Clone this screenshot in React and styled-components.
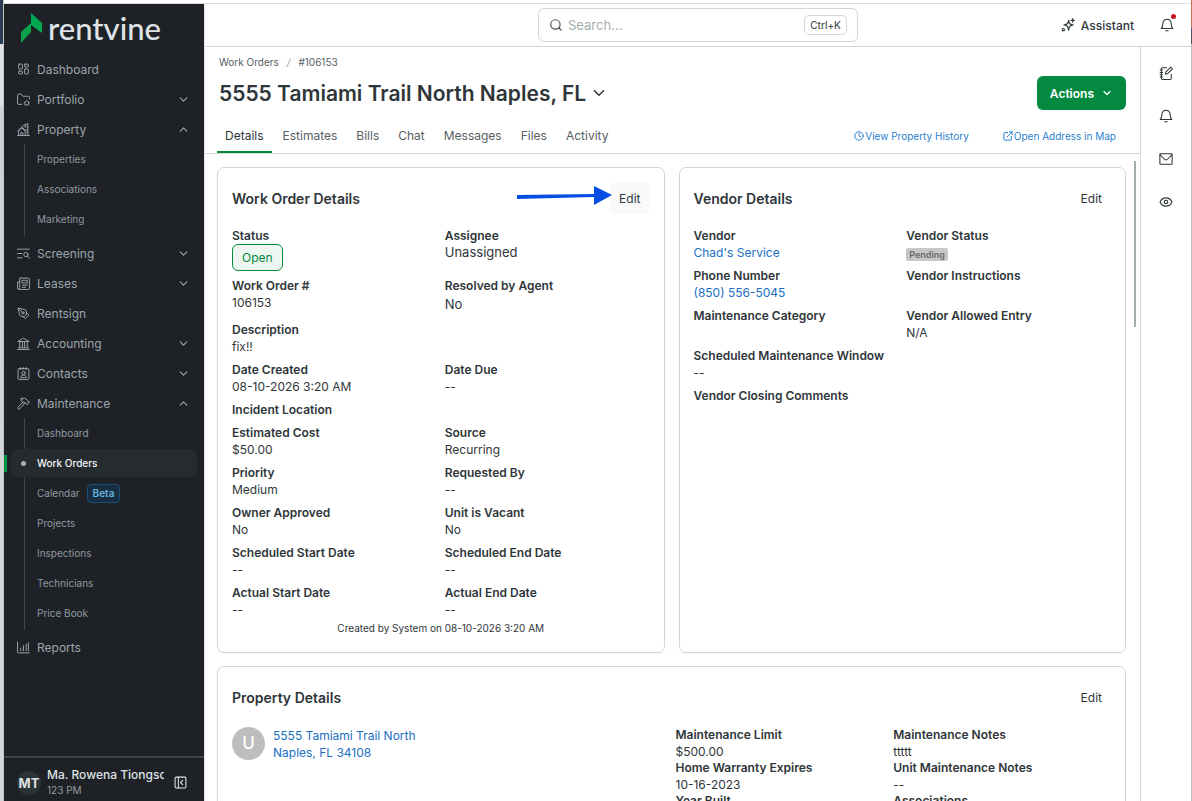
import styled, { createGlobalStyle, css } from "styled-components";
import {
  ChevronDown,
  ChevronUp,
  Clock,
  Eye,
  LayoutDashboard,
  PenTool,
  Search,
} from "lucide-react";

const Icon = ({ size = 13, width = 1.8, children }) => (
  <svg
    width={size}
    height={size}
    viewBox="0 0 24 24"
    fill="none"
    stroke="currentColor"
    strokeWidth={width}
    strokeLinecap="round"
    strokeLinejoin="round"
    aria-hidden="true"
  >
    {children}
  </svg>
);

const FolderHomeIcon = () => (
  <Icon>
    <path d="M9 21H3a2 2 0 0 1-2-2V4a2 2 0 0 1 2-2h5l3 4h10a2 2 0 0 1 2 2v3" />
    <path d="M13 18l5-4 5 4M14.500 17.500V22h7v-4.500" />
  </Icon>
);

const BuildingsIcon = () => (
  <Icon>
    <path d="M1 23h22M3 23v-8l6-6 6 6v8M1 15l8-8 8 8M7 23v-5h4v5" />
    <path d="M11 5l9-4v22M15 3v5M18 7h2M18 12h2M18 17h2" />
  </Icon>
);

const ScreeningIcon = () => (
  <Icon>
    <path d="M1 4h22M1 12h8M1 20h8" />
    <circle cx="16.500" cy="14" r="4" />
    <path d="M19.500 17l3.500 4" />
  </Icon>
);

const LeasesIcon = () => (
  <Icon>
    <path d="M6 2h15a2 2 0 0 1 2 2v17a2 2 0 0 1-2 2H4a3 3 0 0 1-3-3V9h4M5 2v17a2 2 0 0 1-2 3" />
    <path d="M10 6h9v5h-9zM10 15h9M10 19h6" />
  </Icon>
);

const BankIcon = () => (
  <Icon>
    <path d="M2 8l10-6 10 6zM1 23h22M3 20h18M5 9v10M10 9v10M14 9v10M19 9v10" />
  </Icon>
);

const ContactsIcon = () => (
  <Icon>
    <rect x="2" y="3" width="20" height="20" rx="2" />
    <path d="M7 1v4M12 1v3M17 1v4M7 19c0-3 2-4 5-4s5 1 5 4z" />
    <circle cx="12" cy="11" r="3" />
  </Icon>
);

const HammerIcon = () => (
  <Icon>
    <path d="M11 9L2 19a2 2 0 0 0 3 3l9-10" />
    <path d="M7 3c5-2 9-1 12 3l1 2 3 1-4 5-3-2-1-2-4 1-3-4 2-2z" />
  </Icon>
);

const ReportsIcon = () => (
  <Icon>
    <path d="M1 2v18a2 2 0 0 0 2 2h20M7 18v-5M12 18V9M17 18V6M21 18V3" />
  </Icon>
);

const SparkleIcon = () => (
  <Icon size={14} width={2}>
    <path d="M13 4c1 6 2 7 8 8-6 1-7 2-8 9-1-7-2-8-8-9 6-1 7-2 8-8z" />
    <path d="M20 1v6M17 4h6" />
    <circle cx="4" cy="20" r="2" />
  </Icon>
);

const BellIcon = () => (
  <Icon size={14} width={1.8}>
    <path d="M12 2c-4 0-7 3-7 7 0 5-1 7-3 9h20c-2-2-3-4-3-9 0-4-3-7-7-7zM10 22h4" />
  </Icon>
);

const MailIcon = () => (
  <Icon size={14} width={1.8}>
    <rect x="1.500" y="3" width="21" height="18" rx="1" />
    <path d="M2 5l7 7c2 2 4 2 6 0l7-7" />
  </Icon>
);

const NotebookIcon = () => (
  <Icon size={14} width={1.8}>
    <path d="M13 3H6a2 2 0 0 0-2 2v16a2 2 0 0 0 2 2h13a2 2 0 0 0 2-2v-7" />
    <path d="M2 7h4M2 11h4M2 15h4M2 19h4M11 14l1-4 8-8 3 3-8 8z" />
  </Icon>
);

const ExternalIcon = () => (
  <Icon size={10} width={2.4}>
    <path d="M11 4H4a2 2 0 0 0-2 2v14a2 2 0 0 0 2 2h14a2 2 0 0 0 2-2v-7" />
    <path d="M15 2h7v7M22 2L9 15" />
  </Icon>
);

const CollapseIcon = () => (
  <Icon width={2}>
    <rect x="2" y="2" width="20" height="20" rx="2" />
    <path d="M8 2v20M16 8l-4 4 4 4" />
  </Icon>
);

const NAV = [
  { label: "Dashboard", icon: <LayoutDashboard size={14} strokeWidth={1.8} /> },
  { label: "Portfolio", icon: <FolderHomeIcon />, items: [] },
  {
    label: "Property",
    icon: <BuildingsIcon />,
    open: true,
    items: [
      { label: "Properties" },
      { label: "Associations" },
      { label: "Marketing" },
    ],
  },
  { label: "Screening", icon: <ScreeningIcon />, items: [] },
  { label: "Leases", icon: <LeasesIcon />, items: [] },
  { label: "Rentsign", icon: <PenTool size={13} strokeWidth={1.8} /> },
  { label: "Accounting", icon: <BankIcon />, items: [] },
  { label: "Contacts", icon: <ContactsIcon />, items: [] },
  {
    label: "Maintenance",
    icon: <HammerIcon />,
    open: true,
    items: [
      { label: "Dashboard" },
      { label: "Work Orders", active: true },
      { label: "Calendar", badge: "Beta" },
      { label: "Projects" },
      { label: "Inspections" },
      { label: "Technicians" },
      { label: "Price Book" },
    ],
  },
  { label: "Reports", icon: <ReportsIcon /> },
];

const TABS = [
  "Details",
  "Estimates",
  "Bills",
  "Chat",
  "Messages",
  "Files",
  "Activity",
];

const Sidebar = () => (
  <SidebarContainer>
    <Logo href="#">
      <svg width="21" height="30" viewBox="0 0 21 30" aria-hidden="true">
        <path d="M10 0l11 10v10L10 12z" fill="#00a94f" />
        <path d="M10 10v9L0 30V19z" fill="#08a04b" />
      </svg>
      rentvine
    </Logo>
    <nav>
      {NAV.map((group) => (
        <div key={group.label}>
          <NavRow href="#">
            <NavIcon>{group.icon}</NavIcon>
            <span>{group.label}</span>
            {group.items &&
              (group.open ? (
                <ChevronUp size={13} strokeWidth={2} />
              ) : (
                <ChevronDown size={13} strokeWidth={2} />
              ))}
          </NavRow>
          {group.open && (
            <SubNav>
              {group.items.map((item) => (
                <SubRow key={item.label} $active={item.active}>
                  <a href="#">{item.label}</a>
                  {item.badge && <BetaBadge>{item.badge}</BetaBadge>}
                </SubRow>
              ))}
            </SubNav>
          )}
        </div>
      ))}
    </nav>
    <UserBar>
      <UserInitials>MT</UserInitials>
      <UserText>
        <strong>Ma. Rowena Tiongson</strong>
        <span>123 PM</span>
      </UserText>
      <IconButton aria-label="Collapse sidebar">
        <CollapseIcon />
      </IconButton>
    </UserBar>
  </SidebarContainer>
);

const TopBar = () => (
  <TopBarContainer>
    <SearchBox>
      <Search size={14} strokeWidth={2} />
      <input type="search" placeholder="Search..." aria-label="Search" />
      <kbd>Ctrl+K</kbd>
    </SearchBox>
    <TopActions>
      <AssistantButton>
        <SparkleIcon />
        Assistant
      </AssistantButton>
      <IconButton aria-label="Notifications">
        <BellIcon />
        <UnreadDot />
      </IconButton>
    </TopActions>
  </TopBarContainer>
);

const PageHeader = () => (
  <PageHeaderContainer>
    <Breadcrumbs aria-label="Breadcrumb">
      <a href="#">Work Orders</a>
      <i>/</i>
      <span>#106153</span>
    </Breadcrumbs>
    <TitleRow>
      <h1>5555 Tamiami Trail North Naples, FL</h1>
      <IconButton aria-label="Switch work order">
        <ChevronDown size={18} strokeWidth={2} />
      </IconButton>
      <ActionsButton>
        Actions
        <ChevronDown size={12} strokeWidth={2.4} />
      </ActionsButton>
    </TitleRow>
    <TabRow>
      {TABS.map((tab) => (
        <Tab key={tab} $active={tab === "Details"}>
          {tab}
        </Tab>
      ))}
      <QuickLinks>
        <a href="#">
          <Clock size={10} strokeWidth={2.4} />
          View Property History
        </a>
        <a href="#">
          <ExternalIcon />
          Open Address in Map
        </a>
      </QuickLinks>
    </TabRow>
  </PageHeaderContainer>
);

const Field = ({ label, large, wide, children }) => (
  <FieldItem $wide={wide}>
    <dt>{label}</dt>
    {children && <FieldValue $large={large}>{children}</FieldValue>}
  </FieldItem>
);

const WorkOrderCard = () => (
  <Card>
    <CardHeader>
      <h2>Work Order Details</h2>
      <EditButton $highlight>
        Edit
        <Arrow width="95" height="20" viewBox="0 0 95 20" aria-hidden="true">
          <path d="M0 9l77-1V0l18 9-18 10v-8L0 13z" fill="#064ee3" />
        </Arrow>
      </EditButton>
    </CardHeader>
    <FieldGrid>
      <Field label="Status">
        <StatusPill>Open</StatusPill>
      </Field>
      <Field label="Assignee">
        <Emphasis>Unassigned</Emphasis>
      </Field>
      <Field label="Work Order #">106153</Field>
      <Field label="Resolved by Agent" large>
        No
      </Field>
      <Field label="Description" wide>
        fix!!
      </Field>
      <Field label="Date Created">08-10-2026 3:20 AM</Field>
      <Field label="Date Due">--</Field>
      <Field label="Incident Location" wide />
      <Field label="Estimated Cost">$50.00</Field>
      <Field label="Source">Recurring</Field>
      <Field label="Priority">Medium</Field>
      <Field label="Requested By">--</Field>
      <Field label="Owner Approved">No</Field>
      <Field label="Unit is Vacant">No</Field>
      <Field label="Scheduled Start Date">--</Field>
      <Field label="Scheduled End Date">--</Field>
      <Field label="Actual Start Date">--</Field>
      <Field label="Actual End Date">--</Field>
    </FieldGrid>
    <CardFooter>Created by System on 08-10-2026 3:20 AM</CardFooter>
  </Card>
);

const VendorCard = () => (
  <Card>
    <CardHeader>
      <h2>Vendor Details</h2>
      <EditButton>Edit</EditButton>
    </CardHeader>
    <FieldGrid>
      <Field label="Vendor">
        <a href="#">Chad's Service</a>
      </Field>
      <Field label="Vendor Status">
        <PendingBadge>Pending</PendingBadge>
      </Field>
      <Field label="Phone Number">
        <a href="#">(850) 556-5045</a>
      </Field>
      <Field label="Vendor Instructions" />
      <Field label="Maintenance Category" />
      <Field label="Vendor Allowed Entry">N/A</Field>
      <Field label="Scheduled Maintenance Window" wide>
        --
      </Field>
      <Field label="Vendor Closing Comments" wide />
    </FieldGrid>
  </Card>
);

const PropertyCard = () => (
  <Card $full>
    <CardHeader>
      <h2>Property Details</h2>
      <EditButton>Edit</EditButton>
    </CardHeader>
    <PropertyBody>
      <PropertyLink href="#">
        <PropertyAvatar>U</PropertyAvatar>
        <span>
          5555 Tamiami Trail North
          <br />
          Naples, FL 34108
        </span>
      </PropertyLink>
      <FieldGrid $dense>
        <Field label="Maintenance Limit">$500.00</Field>
        <Field label="Maintenance Notes">ttttt</Field>
        <Field label="Home Warranty Expires">10-16-2023</Field>
        <Field label="Unit Maintenance Notes">--</Field>
        <Field label="Year Built" />
        <Field label="Associations" />
      </FieldGrid>
    </PropertyBody>
  </Card>
);

export default function App() {
  return (
    <>
      <GlobalStyle />
      <Shell>
        <LeftEdge />
        <Frame>
          <Sidebar />
          <Workspace>
            <TopBar />
            <Body>
              <Main>
                <PageHeader />
                <Cards>
                  <WorkOrderCard />
                  <VendorCard />
                  <PropertyCard />
                  <ScrollThumb />
                </Cards>
              </Main>
              <Rail>
                <IconButton aria-label="Notes">
                  <NotebookIcon />
                </IconButton>
                <IconButton aria-label="Reminders">
                  <BellIcon />
                </IconButton>
                <IconButton aria-label="Email">
                  <MailIcon />
                </IconButton>
                <IconButton aria-label="Watchers">
                  <Eye size={14} strokeWidth={2} />
                </IconButton>
              </Rail>
            </Body>
          </Workspace>
        </Frame>
        <RightEdge />
      </Shell>
    </>
  );
}

const GlobalStyle = createGlobalStyle`
  * {
    box-sizing: border-box;
  }
  body {
    margin: 0;
    font-family: Inter, "Liberation Sans", sans-serif;
    font-size: 12px;
    color: #2f363a;
    background: #fff;
  }
  button, input {
    font: inherit;
    color: inherit;
    border: 0;
    padding: 0;
    background: none;
  }
  a {
    color: #1a6fc4;
    text-decoration: none;
  }
  h1, h2, dl, dd {
    margin: 0;
  }
`;

const Shell = styled.div`
  display: flex;
  height: 100vh;
  overflow: hidden;
`;

const LeftEdge = styled.div`
  width: 4px;
  flex: none;
  border-right: 1px solid #c3c5c7;
  background: linear-gradient(#2c3c50 44px, #dfe0e2 44px, #dfe0e2 107px, #cfd2d5 107px, #d5d6d8);
`;

const RightEdge = styled.div`
  width: 1px;
  flex: none;
  background: linear-gradient(#c8705c 28px, #4a5565 28px, #4a5565 44px, #b9bcc0 44px);
`;

const Frame = styled.div`
  flex: 1;
  min-width: 0;
  display: flex;
  margin-top: 3px;
  border-top: 1px solid #dcdedf;
`;

const SidebarContainer = styled.aside`
  width: 200px;
  flex: none;
  display: flex;
  flex-direction: column;
  background: #1e2226;
  nav {
    flex: 1;
    min-height: 0;
  }
`;

const Logo = styled.a`
  display: flex;
  align-items: center;
  gap: 6px;
  height: 48px;
  margin-bottom: 2px;
  padding-left: 17px;
  font-family: Lato, sans-serif;
  font-size: 31px;
  font-weight: 500;
  color: #dfe3e8;
`;

const NavRow = styled.a`
  display: flex;
  align-items: center;
  gap: 7px;
  height: 30px;
  padding: 0 14px 0 13px;
  color: #9ca4ad;
  span {
    flex: 1;
  }
`;

const NavIcon = styled.i`
  display: flex;
  justify-content: center;
  width: 13px;
`;

const SubNav = styled.ul`
  list-style: none;
  margin: 0;
  padding: 1px 7px 3px;
  background: linear-gradient(#3e4449, #3e4449) 20px 0 / 1px calc(100% - 2px) no-repeat;
`;

const SubRow = styled.li`
  position: relative;
  display: flex;
  align-items: center;
  gap: 7px;
  height: 28px;
  margin-bottom: 2px;
  padding-left: 26px;
  border-radius: 6px;
  font-size: 10px;
  a {
    color: #9198a1;
  }
  ${({ $active }) =>
    $active &&
    css`
      background: #262b2f;
      a {
        color: #f1f3f5;
        font-weight: 500;
      }
      &::before {
        content: "";
        position: absolute;
        left: -7px;
        width: 3px;
        height: 17px;
        background: #009245;
      }
      &::after {
        content: "";
        position: absolute;
        left: 10px;
        width: 5px;
        height: 5px;
        border-radius: 50%;
        background: #a5adb5;
      }
    `}
`;

const BetaBadge = styled.span`
  padding: 0 5px;
  border: 1px solid #1d4e78;
  border-radius: 4px;
  line-height: 17px;
  font-weight: 600;
  color: #67b3dd;
  background: #172e42;
`;

const UserBar = styled.div`
  display: flex;
  align-items: center;
  gap: 6px;
  height: 45px;
  padding: 6px 17px 0 13px;
  border-top: 2px solid #3d4347;
  color: #dfe2e5;
`;

const UserInitials = styled.div`
  flex: none;
  width: 24px;
  height: 24px;
  border-radius: 50%;
  display: flex;
  align-items: center;
  justify-content: center;
  font-size: 13px;
  font-weight: 700;
  background: #2c3336;
`;

const UserText = styled.div`
  flex: 1;
  min-width: 0;
  margin-right: 4px;
  overflow: hidden;
  white-space: nowrap;
  line-height: 15px;
  strong {
    display: block;
    font-weight: 500;
  }
  span {
    font-size: 10px;
    color: #9299a0;
  }
`;

const IconButton = styled.button`
  position: relative;
  display: flex;
  cursor: pointer;
`;

const Workspace = styled.div`
  flex: 1;
  min-width: 0;
  display: flex;
  flex-direction: column;
  border-left: 1px solid #e3e5e6;
`;

const TopBarContainer = styled.header`
  display: grid;
  grid-template-columns: 1fr 320px 1fr;
  align-items: center;
  height: 43px;
  flex: none;
  border-bottom: 1px solid #d3d7d8;
`;

const SearchBox = styled.label`
  grid-column: 2;
  display: flex;
  align-items: center;
  gap: 5px;
  height: 34px;
  padding: 0 10px;
  border: 1px solid #d3d7d8;
  border-radius: 6px;
  color: #4a5358;
  input {
    flex: 1;
    min-width: 0;
    font-size: 13px;
    outline: none;
  }
  input::placeholder {
    color: #a3adb1;
  }
  kbd {
    padding: 0 5px;
    border: 1px solid #d3d7d8;
    border-radius: 5px;
    font-family: inherit;
    font-size: 10px;
    font-weight: 500;
    line-height: 18px;
  }
`;

const TopActions = styled.div`
  display: flex;
  align-items: center;
  justify-content: flex-end;
  gap: 26px;
  padding-right: 17px;
`;

const AssistantButton = styled.button`
  display: flex;
  align-items: center;
  gap: 6px;
  font-weight: 500;
`;

const UnreadDot = styled.span`
  position: absolute;
  top: -4px;
  right: -2px;
  width: 5px;
  height: 5px;
  border-radius: 50%;
  background: #c4161c;
`;

const Body = styled.div`
  flex: 1;
  min-height: 0;
  display: flex;
`;

const Main = styled.main`
  flex: 1;
  min-width: 0;
  display: flex;
  flex-direction: column;
`;

const Rail = styled.aside`
  width: 51px;
  flex: none;
  display: flex;
  flex-direction: column;
  align-items: center;
  gap: 29px;
  padding-top: 19px;
  border-left: 1px solid #d3d7d8;
`;

const PageHeaderContainer = styled.div`
  flex: none;
  padding: 8px 14px 0;
  border-bottom: 1px solid #d3d7d8;
`;

const Breadcrumbs = styled.nav`
  display: flex;
  gap: 8px;
  margin-bottom: 6px;
  font-size: 10px;
  line-height: 15px;
  color: #566064;
  a {
    color: inherit;
  }
  i {
    color: #9ba3a6;
  }
`;

const TitleRow = styled.div`
  display: flex;
  align-items: center;
  height: 34px;
  gap: 4px;
  h1 {
    font-size: 21px;
    font-weight: 600;
  }
`;

const ActionsButton = styled.button`
  display: flex;
  align-items: center;
  gap: 7px;
  height: 34px;
  margin-left: auto;
  padding: 0 13px;
  border-radius: 6px;
  font-weight: 600;
  color: #fff;
  background: #048a40;
`;

const TabRow = styled.div`
  display: flex;
  gap: 3px;
  height: 43px;
  margin-left: -2px;
`;

const Tab = styled.button`
  padding: 9px 8px 0;
  border-bottom: 2px solid ${({ $active }) => ($active ? "#048a40" : "transparent")};
  color: ${({ $active }) => ($active ? "#2f363a" : "#566064")};
`;

const QuickLinks = styled.div`
  display: flex;
  align-items: center;
  gap: 34px;
  margin-left: auto;
  padding: 9px 10px 0 0;
  font-size: 10px;
  a {
    display: flex;
    align-items: center;
    gap: 1px;
    color: #2b80d0;
  }
`;

const Cards = styled.div`
  position: relative;
  flex: 1;
  min-height: 0;
  overflow: hidden;
  display: grid;
  grid-template-columns: 1fr 1fr;
  align-content: start;
  gap: 13px 14px;
  padding: 13px 14px 0 12px;
`;

const ScrollThumb = styled.div`
  position: absolute;
  top: 7px;
  right: 4px;
  width: 2px;
  height: 166px;
  background: #a3adb0;
`;

const Card = styled.section`
  min-width: 0;
  padding: 14px;
  border: 1px solid #d3d7d8;
  border-radius: 7px;
  box-shadow: 0 1px 2px #0000000d;
  ${({ $full }) =>
    $full &&
    css`
      grid-column: 1 / -1;
    `}
`;

const CardHeader = styled.div`
  display: flex;
  align-items: center;
  justify-content: space-between;
  height: 32px;
  margin-bottom: 14px;
  h2 {
    font-size: 14px;
    font-weight: 600;
  }
`;

const EditButton = styled.button`
  position: relative;
  height: 32px;
  padding: 0 9px;
  border-radius: 6px;
  background: ${({ $highlight }) => ($highlight ? "#f9f9fa" : "none")};
`;

const Arrow = styled.svg`
  position: absolute;
  right: 38px;
  top: 4px;
`;

const FieldGrid = styled.dl`
  display: grid;
  grid-template-columns: 1fr 1fr;
  column-gap: ${({ $dense }) => ($dense ? "0" : "8px")};
  row-gap: ${({ $dense }) => ($dense ? "0" : "7px")};
`;

const FieldItem = styled.div`
  min-width: 0;
  grid-column: ${({ $wide }) => ($wide ? "1 / -1" : "auto")};
  dt {
    font-weight: 600;
    line-height: 16px;
  }
`;

const FieldValue = styled.dd`
  display: flex;
  align-items: center;
  font-size: ${({ $large }) => ($large ? "13px" : "12px")};
  line-height: ${({ $large }) => ($large ? "21px" : "17px")};
`;

const Emphasis = styled.span`
  font-size: 13px;
`;

const StatusPill = styled.span`
  padding: 0 9px;
  border: 1px solid #048a40;
  border-radius: 6px;
  line-height: 25px;
  color: #048a40;
  background: #edf6f1;
`;

const PendingBadge = styled.span`
  margin-top: 4px;
  padding: 0 3px;
  border-radius: 2px;
  font-size: 9px;
  font-weight: 600;
  line-height: 13px;
  color: #666a6c;
  background: #c8c8c8;
`;

const CardFooter = styled.p`
  margin: 2px 0 2px;
  text-align: center;
  font-size: 10px;
  line-height: 16px;
`;

const PropertyBody = styled.div`
  display: grid;
  grid-template-columns: 1fr 1fr;
  column-gap: 8px;
`;

const PropertyLink = styled.a`
  display: flex;
  align-items: flex-start;
  gap: 8px;
  line-height: 17px;
`;

const PropertyAvatar = styled.span`
  width: 33px;
  height: 33px;
  border-radius: 50%;
  display: flex;
  align-items: center;
  justify-content: center;
  font-size: 17px;
  font-weight: 500;
  color: #fff;
  background: #bdbdbd;
`;
